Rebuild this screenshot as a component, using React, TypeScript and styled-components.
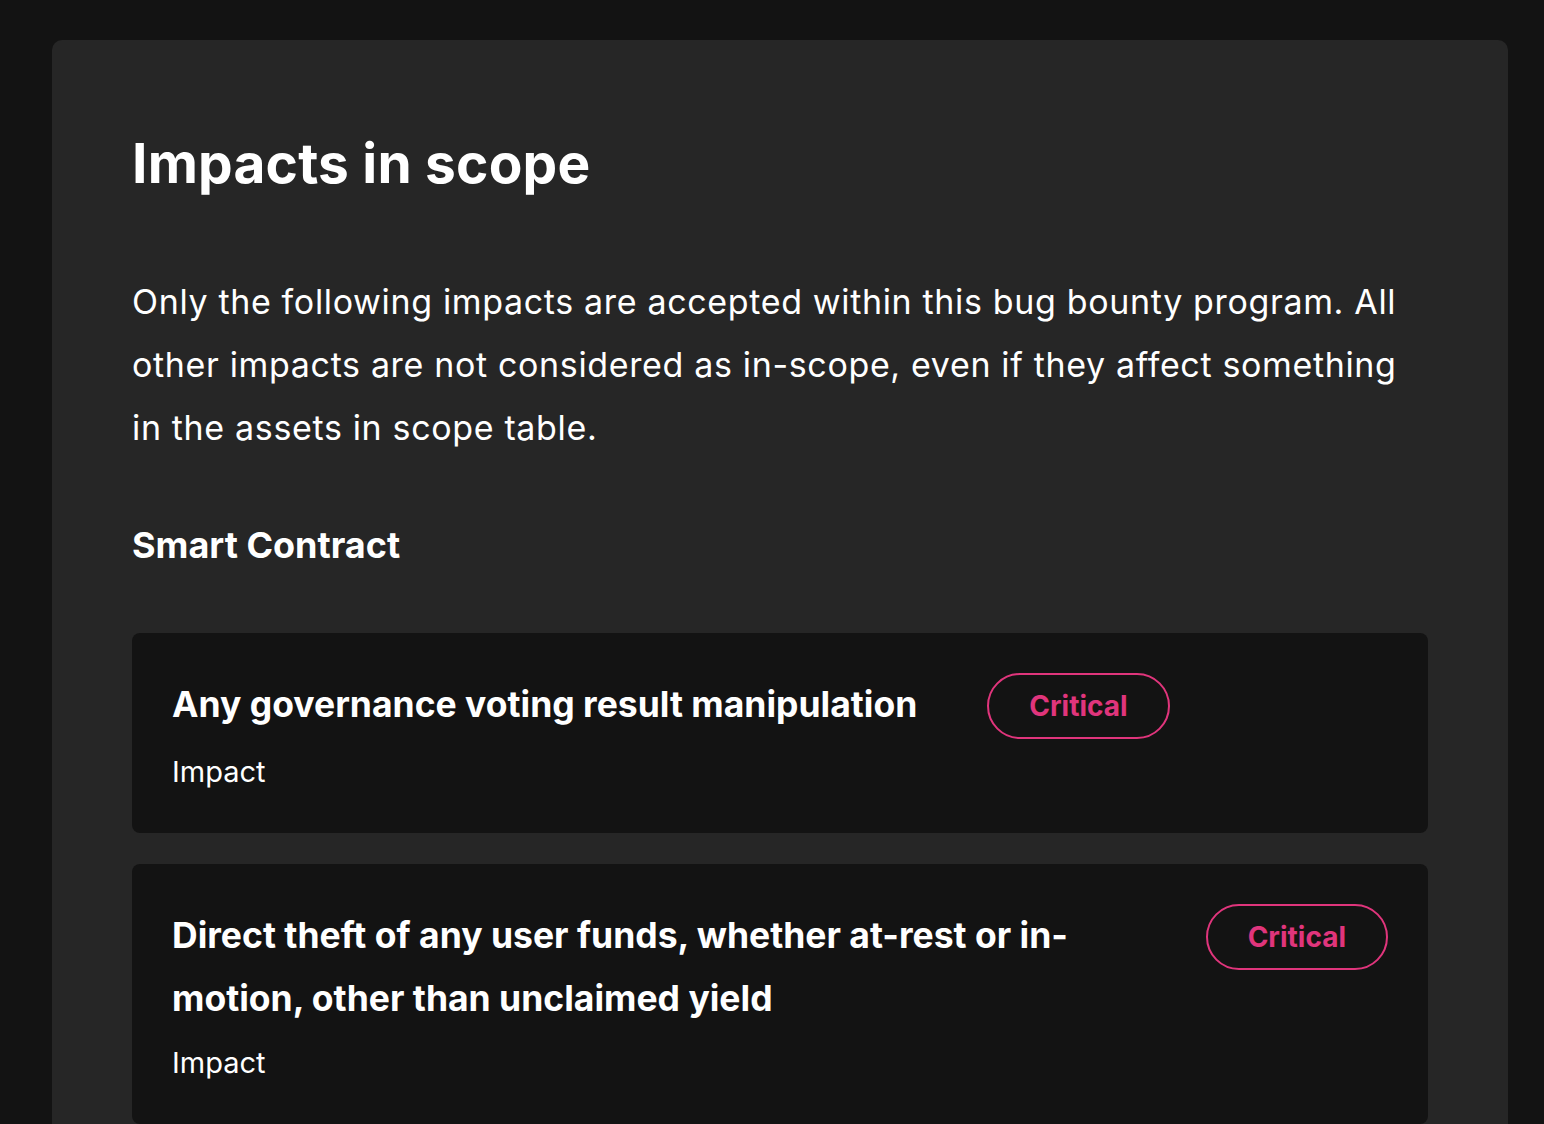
import React from 'react';
import styled, { createGlobalStyle } from 'styled-components';

const GlobalStyle = createGlobalStyle`
  html, body {
    margin: 0;
    padding: 0;
    background: #131313;
  }
  body {
    font-family: Inter, "Noto Sans", sans-serif;
    color: #ffffff;
  }
`;

interface IImpact {
  title: string;
  severity: string;
}

const impacts: IImpact[] = [
  { title: 'Any governance voting result manipulation', severity: 'Critical' },
  {
    title: 'Direct theft of any user funds, whether at-rest or in-motion, other than unclaimed yield',
    severity: 'Critical',
  },
];

const App = () => {
  return (
    <>
      <GlobalStyle />
      <Page>
        <Section>
          <Heading>Impacts in scope</Heading>
          <Intro>
            Only the following impacts are accepted within this bug bounty program. All other impacts are not
            considered as in-scope, even if they affect something in the assets in scope table.
          </Intro>
          <Category>Smart Contract</Category>
          <ImpactList>
            {impacts.map(impact => (
              <ImpactCard key={impact.title}>
                <ImpactRow>
                  <ImpactTitle>{impact.title}</ImpactTitle>
                  <SeverityBadge>{impact.severity}</SeverityBadge>
                </ImpactRow>
                <ImpactLabel>Impact</ImpactLabel>
              </ImpactCard>
            ))}
          </ImpactList>
        </Section>
      </Page>
    </>
  );
};

const Page = styled.main`
  padding: 40px 36px 0 52px;
  min-height: 1124px;
  box-sizing: border-box;
`;

const Section = styled.section`
  background: #262626;
  border-radius: 10px;
  padding: 80px 80px 40px;
`;

const Heading = styled.h2`
  margin: 0;
  font-size: 55px;
  font-weight: 700;
  line-height: 86px;
  letter-spacing: 0.2px;
`;

const Intro = styled.p`
  margin: 64px 0 0;
  font-size: 34px;
  line-height: 63px;
  font-weight: 400;
  letter-spacing: 0.65px;
`;

const Category = styled.h3`
  margin: 55px 0 0;
  font-size: 36px;
  line-height: 63px;
  font-weight: 700;
`;

const ImpactList = styled.div`
  display: flex;
  flex-direction: column;
  gap: 31px;
  margin-top: 56px;
`;

const ImpactCard = styled.div`
  background: #131313;
  border-radius: 8px;
  padding: 40px;
`;

const ImpactRow = styled.div`
  display: flex;
  align-items: flex-start;
  gap: 70px;
`;

const ImpactTitle = styled.div`
  flex: 0 1 auto;
  font-size: 35.5px;
  line-height: 63px;
  font-weight: 700;
`;

const SeverityBadge = styled.span`
  flex-shrink: 0;
  display: inline-flex;
  align-items: center;
  justify-content: center;
  box-sizing: border-box;
  height: 66px;
  padding: 0 40px;
  border: 2px solid #e0357c;
  border-radius: 33px;
  color: #e0357c;
  font-size: 28px;
  font-weight: 700;
`;

const ImpactLabel = styled.div`
  margin-top: 12px;
  font-size: 29px;
  line-height: 42px;
  font-weight: 400;
`;

export default App;
